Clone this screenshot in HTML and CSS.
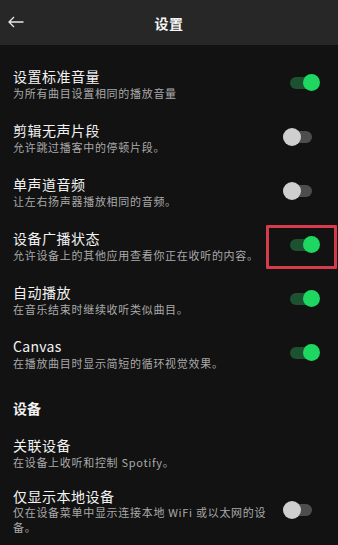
FILE: index.html
```html
<!DOCTYPE html>
<html lang="zh-CN">
<head>
    <meta charset="UTF-8">
    <meta name="viewport" content="width=device-width, initial-scale=1.0">
    <title>设置</title>
    <link rel="stylesheet" href="styles.css">
</head>
<body>
    <header class="topbar">
        <svg class="back" width="16" height="12" viewBox="0 0 16 12">
            <path d="M15.5 6H1M6 1L1 6l5 5" fill="none" stroke="#e6e6e6" stroke-width="1.3"/>
        </svg>
        <h1 class="title">设置</h1>
    </header>

    <main class="settings">
        <div class="row">
            <div class="text">
                <p class="name">设置标准音量</p>
                <p class="desc">为所有曲目设置相同的播放音量</p>
            </div>
            <div class="toggle on"><span class="knob"></span></div>
        </div>
        <div class="row">
            <div class="text">
                <p class="name">剪辑无声片段</p>
                <p class="desc">允许跳过播客中的停顿片段。</p>
            </div>
            <div class="toggle"><span class="knob"></span></div>
        </div>
        <div class="row">
            <div class="text">
                <p class="name">单声道音频</p>
                <p class="desc">让左右扬声器播放相同的音频。</p>
            </div>
            <div class="toggle"><span class="knob"></span></div>
        </div>
        <div class="row">
            <div class="text">
                <p class="name">设备广播状态</p>
                <p class="desc">允许设备上的其他应用查看你正在收听的内容。</p>
            </div>
            <div class="toggle on"><span class="knob"></span></div>
            <div class="highlight"></div>
        </div>
        <div class="row">
            <div class="text">
                <p class="name">自动播放</p>
                <p class="desc">在音乐结束时继续收听类似曲目。</p>
            </div>
            <div class="toggle on"><span class="knob"></span></div>
        </div>
        <div class="row">
            <div class="text">
                <p class="name latin">Canvas</p>
                <p class="desc">在播放曲目时显示简短的循环视觉效果。</p>
            </div>
            <div class="toggle on"><span class="knob"></span></div>
        </div>

        <h2 class="section">设备</h2>

        <div class="row plain">
            <div class="text">
                <p class="name">关联设备</p>
                <p class="desc">在设备上收听和控制 Spotify。</p>
            </div>
        </div>
        <div class="row">
            <div class="text">
                <p class="name">仅显示本地设备</p>
                <p class="desc wrap">仅在设备菜单中显示连接本地 WiFi 或以太网的设<br>备。</p>
            </div>
            <div class="toggle"><span class="knob"></span></div>
        </div>
    </main>
</body>
</html>
```

FILE: styles.css
```css
body {
    margin: 0;
    background-color: #121212;
    font-family: "Noto Sans CJK SC", "Noto Sans", Roboto, sans-serif;
    color: #f2f2f2;
    width: 338px;
    height: 545px;
    overflow: hidden;
}

.topbar {
    height: 45px;
    background-color: #272727;
    display: flex;
    align-items: center;
    justify-content: center;
    position: relative;
}
.back {
    position: absolute;
    left: 8px;
    top: 16px;
}
.title {
    margin: 0;
    font-size: 14px;
    font-weight: 700;
    letter-spacing: 0.5px;
    color: #f5f5f5;
    padding-top: 1px;
}

.settings {
    padding: 12px 18px 0 13px;
}

.row {
    display: flex;
    align-items: center;
    gap: 10px;
    padding: 10px 0;
    position: relative;
}
.row.plain {
    padding: 9px 0 7px;
}
.text {
    flex: 1;
    min-width: 0;
}
.name {
    margin: 0;
    font-size: 14px;
    line-height: 18px;
    letter-spacing: 0.5px;
    color: #f2f2f2;
}
.name.latin {
    letter-spacing: 0.3px;
}
.desc {
    margin: 0;
    font-size: 11px;
    line-height: 16px;
    letter-spacing: 0.7px;
    color: #a9a9a9;
}
.desc.wrap {
    line-height: 15px;
}

.toggle {
    width: 37px;
    height: 18px;
    flex-shrink: 0;
    display: flex;
    align-items: center;
    position: relative;
    margin-top: -3px;
}
.toggle::before {
    content: "";
    position: absolute;
    left: 0;
    width: 29px;
    height: 12px;
    border-radius: 6px;
    background-color: #4d4d4d;
}
.toggle .knob {
    position: relative;
    width: 18px;
    height: 18px;
    border-radius: 50%;
    background-color: #cfcfcf;
}
.toggle.on {
    justify-content: flex-end;
}
.toggle.on::before {
    left: 7px;
    background-color: #1c5230;
}
.toggle.on .knob {
    width: 17px;
    height: 17px;
    background-color: #1ed760;
}

.highlight {
    position: absolute;
    right: -17px;
    top: 6px;
    width: 65px;
    height: 38px;
    border: 3px solid #d63b4c;
    border-radius: 1px;
}

.section {
    margin: 0;
    padding: 18px 0 10px;
    font-size: 14px;
    line-height: 18px;
    font-weight: 700;
    color: #f2f2f2;
}
```
